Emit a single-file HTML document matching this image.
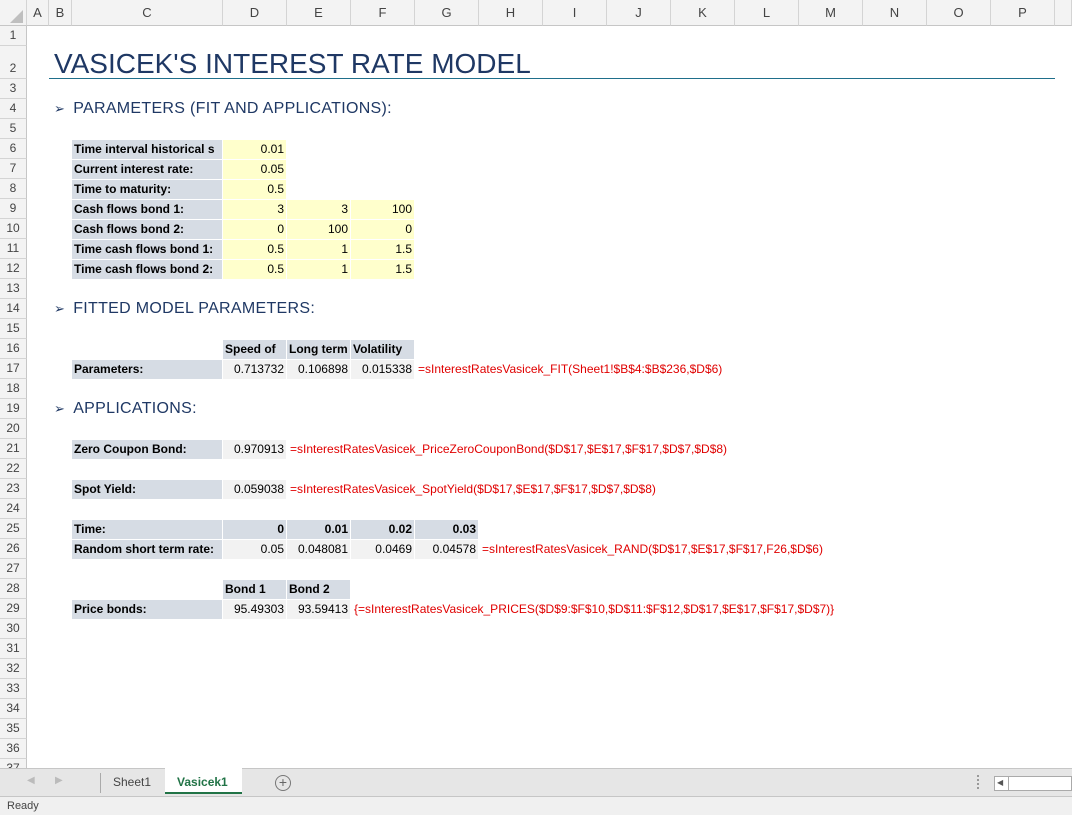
<!DOCTYPE html>
<html><head><meta charset="utf-8"><style>
*{margin:0;padding:0;box-sizing:border-box}
body{width:1072px;height:815px;position:relative;background:#fff;font-family:"Liberation Sans",sans-serif;overflow:hidden}
.a{position:absolute}
.ch{position:absolute;top:0;height:26px;line-height:26px;text-align:center;font-size:13px;color:#444;background:#f3f3f3;border-right:1px solid #d4d4d4;border-bottom:1px solid #c6c6c6}
.rh{position:absolute;left:0;width:27px;text-align:center;font-size:12px;color:#444;background:#f3f3f3;border-bottom:1px solid #d4d4d4;border-right:1px solid #c6c6c6;line-height:19px}
.c{position:absolute;height:19px;line-height:19px;font-size:12px;overflow:hidden;white-space:nowrap;padding:0 2px;color:#000}
.l{background:#d6dce4;font-weight:bold}
.y{background:#ffffcc;text-align:right}
.g{background:#f2f2f2;text-align:right}
.hb{background:#d6dce4;font-weight:bold;text-align:right}
.hl{background:#d6dce4;font-weight:bold}
.f{position:absolute;height:19px;line-height:19px;font-size:12px;color:#e00000;white-space:nowrap;padding-left:3px}
.hd{position:absolute;left:54px;font-size:16px;color:#1f3864;letter-spacing:.3px}
</style></head><body>
<!-- column headers -->
<div class="ch" style="left:0;width:27px"></div>
<div class="ch" style="left:27px;width:22px">A</div>
<div class="ch" style="left:49px;width:23px">B</div>
<div class="ch" style="left:72px;width:151px">C</div>
<div class="ch" style="left:223px;width:64px">D</div>
<div class="ch" style="left:287px;width:64px">E</div>
<div class="ch" style="left:351px;width:64px">F</div>
<div class="ch" style="left:415px;width:64px">G</div>
<div class="ch" style="left:479px;width:64px">H</div>
<div class="ch" style="left:543px;width:64px">I</div>
<div class="ch" style="left:607px;width:64px">J</div>
<div class="ch" style="left:671px;width:64px">K</div>
<div class="ch" style="left:735px;width:64px">L</div>
<div class="ch" style="left:799px;width:64px">M</div>
<div class="ch" style="left:863px;width:64px">N</div>
<div class="ch" style="left:927px;width:64px">O</div>
<div class="ch" style="left:991px;width:64px">P</div>
<div class="ch" style="left:1055px;width:17px"></div>
<svg class="a" style="left:8px;top:10px" width="16" height="14"><polygon points="15,0 15,13 2,13" fill="#bfbfbf"/></svg>
<!-- row headers -->
<div class="rh" style="top:26px;height:20px">1</div>
<div class="rh" style="top:46px;height:33px;line-height:44px">2</div>
<div class="rh" style="top:79px;height:20px">3</div>
<div class="rh" style="top:99px;height:20px">4</div>
<div class="rh" style="top:119px;height:20px">5</div>
<div class="rh" style="top:139px;height:20px">6</div>
<div class="rh" style="top:159px;height:20px">7</div>
<div class="rh" style="top:179px;height:20px">8</div>
<div class="rh" style="top:199px;height:20px">9</div>
<div class="rh" style="top:219px;height:20px">10</div>
<div class="rh" style="top:239px;height:20px">11</div>
<div class="rh" style="top:259px;height:20px">12</div>
<div class="rh" style="top:279px;height:20px">13</div>
<div class="rh" style="top:299px;height:20px">14</div>
<div class="rh" style="top:319px;height:20px">15</div>
<div class="rh" style="top:339px;height:20px">16</div>
<div class="rh" style="top:359px;height:20px">17</div>
<div class="rh" style="top:379px;height:20px">18</div>
<div class="rh" style="top:399px;height:20px">19</div>
<div class="rh" style="top:419px;height:20px">20</div>
<div class="rh" style="top:439px;height:20px">21</div>
<div class="rh" style="top:459px;height:20px">22</div>
<div class="rh" style="top:479px;height:20px">23</div>
<div class="rh" style="top:499px;height:20px">24</div>
<div class="rh" style="top:519px;height:20px">25</div>
<div class="rh" style="top:539px;height:20px">26</div>
<div class="rh" style="top:559px;height:20px">27</div>
<div class="rh" style="top:579px;height:20px">28</div>
<div class="rh" style="top:599px;height:20px">29</div>
<div class="rh" style="top:619px;height:20px">30</div>
<div class="rh" style="top:639px;height:20px">31</div>
<div class="rh" style="top:659px;height:20px">32</div>
<div class="rh" style="top:679px;height:20px">33</div>
<div class="rh" style="top:699px;height:20px">34</div>
<div class="rh" style="top:719px;height:20px">35</div>
<div class="rh" style="top:739px;height:20px">36</div>
<div class="rh" style="top:759px;height:20px">37</div>

<!-- title -->
<div class="a" style="left:54px;top:46px;font-size:28px;color:#1f3864;line-height:36px">VASICEK'S INTEREST RATE MODEL</div>
<div class="a" style="left:49px;top:78px;width:1006px;height:1px;background:#1f6f8b"></div>

<div class="hd" style="top:99px;line-height:20px"><span style="font-size:13px;margin-right:8px">➢</span>PARAMETERS (FIT AND APPLICATIONS):</div>
<div class="hd" style="top:299px;line-height:20px"><span style="font-size:13px;margin-right:8px">➢</span>FITTED MODEL PARAMETERS:</div>
<div class="hd" style="top:399px;line-height:20px"><span style="font-size:13px;margin-right:8px">➢</span>APPLICATIONS:</div>

<!-- params -->
<div class="c l" style="left:72px;top:140px;width:150px">Time interval historical s</div><div class="c y" style="left:223px;top:140px;width:63px">0.01</div>
<div class="c l" style="left:72px;top:160px;width:150px">Current interest rate:</div><div class="c y" style="left:223px;top:160px;width:63px">0.05</div>
<div class="c l" style="left:72px;top:180px;width:150px">Time to maturity:</div><div class="c y" style="left:223px;top:180px;width:63px">0.5</div>
<div class="c l" style="left:72px;top:200px;width:150px">Cash flows bond 1:</div><div class="c y" style="left:223px;top:200px;width:63px">3</div><div class="c y" style="left:287px;top:200px;width:63px">3</div><div class="c y" style="left:351px;top:200px;width:63px">100</div>
<div class="c l" style="left:72px;top:220px;width:150px">Cash flows bond 2:</div><div class="c y" style="left:223px;top:220px;width:63px">0</div><div class="c y" style="left:287px;top:220px;width:63px">100</div><div class="c y" style="left:351px;top:220px;width:63px">0</div>
<div class="c l" style="left:72px;top:240px;width:150px">Time cash flows bond 1:</div><div class="c y" style="left:223px;top:240px;width:63px">0.5</div><div class="c y" style="left:287px;top:240px;width:63px">1</div><div class="c y" style="left:351px;top:240px;width:63px">1.5</div>
<div class="c l" style="left:72px;top:260px;width:150px">Time cash flows bond 2:</div><div class="c y" style="left:223px;top:260px;width:63px">0.5</div><div class="c y" style="left:287px;top:260px;width:63px">1</div><div class="c y" style="left:351px;top:260px;width:63px">1.5</div>

<!-- fitted -->
<div class="c hl" style="left:223px;top:340px;width:63px">Speed of</div><div class="c hl" style="left:287px;top:340px;width:63px">Long term</div><div class="c hl" style="left:351px;top:340px;width:63px">Volatility</div>
<div class="c l" style="left:72px;top:360px;width:150px">Parameters:</div><div class="c g" style="left:223px;top:360px;width:63px">0.713732</div><div class="c g" style="left:287px;top:360px;width:63px">0.106898</div><div class="c g" style="left:351px;top:360px;width:63px">0.015338</div>
<div class="f" style="left:415px;top:360px">=sInterestRatesVasicek_FIT(Sheet1!$B$4:$B$236,$D$6)</div>

<div class="c l" style="left:72px;top:440px;width:150px">Zero Coupon Bond:</div><div class="c g" style="left:223px;top:440px;width:63px">0.970913</div>
<div class="f" style="left:287px;top:440px">=sInterestRatesVasicek_PriceZeroCouponBond($D$17,$E$17,$F$17,$D$7,$D$8)</div>
<div class="c l" style="left:72px;top:480px;width:150px">Spot Yield:</div><div class="c g" style="left:223px;top:480px;width:63px">0.059038</div>
<div class="f" style="left:287px;top:480px">=sInterestRatesVasicek_SpotYield($D$17,$E$17,$F$17,$D$7,$D$8)</div>

<div class="c l" style="left:72px;top:520px;width:150px">Time:</div><div class="c hb" style="left:223px;top:520px;width:63px">0</div><div class="c hb" style="left:287px;top:520px;width:63px">0.01</div><div class="c hb" style="left:351px;top:520px;width:63px">0.02</div><div class="c hb" style="left:415px;top:520px;width:63px">0.03</div>
<div class="c l" style="left:72px;top:540px;width:150px">Random short term rate:</div><div class="c g" style="left:223px;top:540px;width:63px">0.05</div><div class="c g" style="left:287px;top:540px;width:63px">0.048081</div><div class="c g" style="left:351px;top:540px;width:63px">0.0469</div><div class="c g" style="left:415px;top:540px;width:63px">0.04578</div>
<div class="f" style="left:479px;top:540px">=sInterestRatesVasicek_RAND($D$17,$E$17,$F$17,F26,$D$6)</div>

<div class="c hl" style="left:223px;top:580px;width:63px">Bond 1</div><div class="c hl" style="left:287px;top:580px;width:63px">Bond 2</div>
<div class="c l" style="left:72px;top:600px;width:150px">Price bonds:</div><div class="c g" style="left:223px;top:600px;width:63px">95.49303</div><div class="c g" style="left:287px;top:600px;width:63px">93.59413</div>
<div class="f" style="left:351px;top:600px">{=sInterestRatesVasicek_PRICES($D$9:$F$10,$D$11:$F$12,$D$17,$E$17,$F$17,$D$7)}</div>

<!-- tab bar -->
<div class="a" style="left:0;top:768px;width:1072px;height:29px;background:#e6e6e6;border-top:1px solid #c6c6c6;border-bottom:1px solid #c6c6c6"></div>
<div class="a" style="left:27px;top:775px;font-size:10px;color:#bbb">◀</div>
<div class="a" style="left:55px;top:775px;font-size:10px;color:#bbb">▶</div>
<div class="a" style="left:100px;top:773px;width:1px;height:20px;background:#aaa"></div>
<div class="a" style="left:113px;top:775px;font-size:12px;color:#444">Sheet1</div>
<div class="a" style="left:165px;top:768px;width:77px;height:26px;background:#fff;border-bottom:2px solid #217346"></div>
<div class="a" style="left:177px;top:775px;font-size:12px;font-weight:bold;color:#217346">Vasicek1</div>
<div class="a" style="left:275px;top:775px;width:16px;height:16px;border:1px solid #777;border-radius:50%;text-align:center;line-height:13px;font-size:14px;color:#666">+</div>
<div class="a" style="left:977px;top:775px;width:2px;height:14px;border-left:2px dotted #999"></div>
<div class="a" style="left:994px;top:776px;width:78px;height:15px;background:#fff;border:1px solid #aaa"></div>
<div class="a" style="left:1008px;top:776px;width:1px;height:15px;background:#aaa"></div>
<div class="a" style="left:997px;top:778px;font-size:8px;color:#555">◀</div>
<div class="a" style="left:0;top:797px;width:1072px;height:18px;background:#f0f0f0"></div>
<div class="a" style="left:7px;top:800px;font-size:11px;color:#444">Ready</div>
</body></html>
